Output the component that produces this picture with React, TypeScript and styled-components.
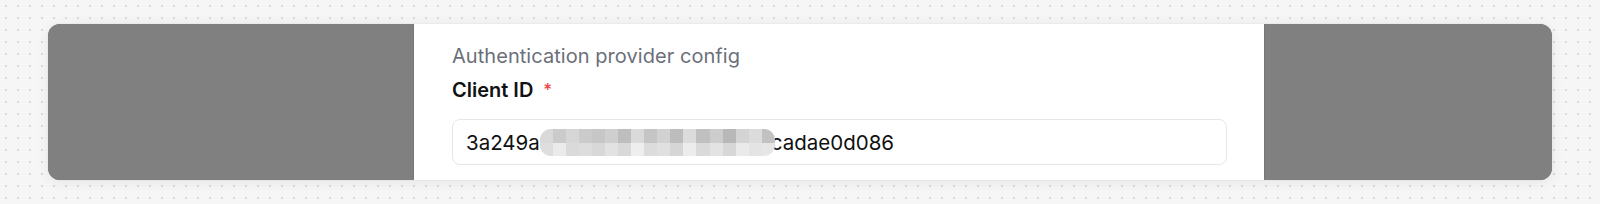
import React from "react";
import styled, { createGlobalStyle } from "styled-components";

const Global = createGlobalStyle`
  html, body { margin: 0; padding: 0; }
  body {
    width: 1600px;
    height: 204px;
    overflow: hidden;
    background-color: #f6f6f7;
    background-image: radial-gradient(circle at 6px 6px, #d9d9dc 0.9px, transparent 1.4px);
    background-size: 12px 12px;
    font-family: Inter, "Liberation Sans", sans-serif;
  }
`;

const Page = styled.div`
  padding: 24px 48px;
  box-sizing: border-box;
  height: 204px;
`;

const Card = styled.div`
  height: 156px;
  border-radius: 12px;
  overflow: hidden;
  background: #808080;
  display: grid;
  grid-template-columns: 366px 850px 1fr;
  box-shadow: 0 2px 14px rgba(0, 0, 0, 0.07), 0 0 0 1px rgba(0, 0, 0, 0.02);
`;

const Side = styled.div`
  background: #808080;
`;

const Panel = styled.div`
  position: relative;
  z-index: 1;
  background: #ffffff;
  box-shadow: 0 0 2px rgba(0, 0, 0, 0.22);
  padding: 20px 37px 0 38px;
  display: flex;
  flex-direction: column;
`;

const Title = styled.div`
  font-size: 20px;
  line-height: 24px;
  color: #6b6f7a;
  letter-spacing: 0.05px;
`;

const Label = styled.div`
  margin-top: 10px;
  font-size: 20px;
  line-height: 24px;
  font-weight: 600;
  color: #111111;
  display: flex;
  align-items: flex-start;
  gap: 10px;
`;

const Req = styled.span`
  margin-top: 3px;
  color: #ef4444;
  font-size: 17px;
  line-height: 18px;
  font-weight: 500;
`;

const Field = styled.div`
  margin-top: 17px;
  height: 46px;
  box-sizing: border-box;
  border: 1px solid #e6e6e8;
  border-radius: 8px;
  padding: 0 13px;
  display: flex;
  align-items: center;
  font-size: 20.5px;
  color: #111111;
  white-space: nowrap;
`;

const Redact = styled.span`
  display: inline-grid;
  grid-template-columns: repeat(18, 1fr);
  grid-template-rows: 14px 13px;
  width: 235px;
  margin: 0 -4px 0 0;
  border-radius: 11px;
  overflow: hidden;
  position: relative;
  z-index: 1;
`;

const Px = styled.span<{ $c: string }>`
  background: ${(p) => p.$c};
`;

const row1 = [
  "#d9d9d9", "#cbcbcb", "#d6d6d6", "#cbcbcb", "#c7c7c7", "#cfcfcf",
  "#bebebe", "#dadada", "#c5c5c5", "#d2d2d2", "#bdbdbd", "#dcdcdc",
  "#c0c0c0", "#cdcdcd", "#b8b8b8", "#d4d4d4", "#dcdcdc", "#c2c2c2",
];
const row2 = [
  "#dedede", "#ebebeb", "#dadada", "#dddddd", "#d8d8d8", "#e2e2e2",
  "#d9d9d9", "#eeeeee", "#dcdcdc", "#e0e0e0", "#d6d6d6", "#ececec",
  "#dadada", "#e3e3e3", "#d7d7d7", "#eaeaea", "#e4e4e4", "#e6e6e6",
];

export default function App() {
  return (
    <>
      <Global />
      <Page>
        <Card>
          <Side />
          <Panel>
            <Title>Authentication provider config</Title>
            <Label>
              Client ID <Req>*</Req>
            </Label>
            <Field>
              <span>3a249a</span>
              <Redact aria-hidden>
                {row1.map((c, i) => (
                  <Px key={"a" + i} $c={c} />
                ))}
                {row2.map((c, i) => (
                  <Px key={"b" + i} $c={c} />
                ))}
              </Redact>
              <span>cadae0d086</span>
            </Field>
          </Panel>
          <Side />
        </Card>
      </Page>
    </>
  );
}
